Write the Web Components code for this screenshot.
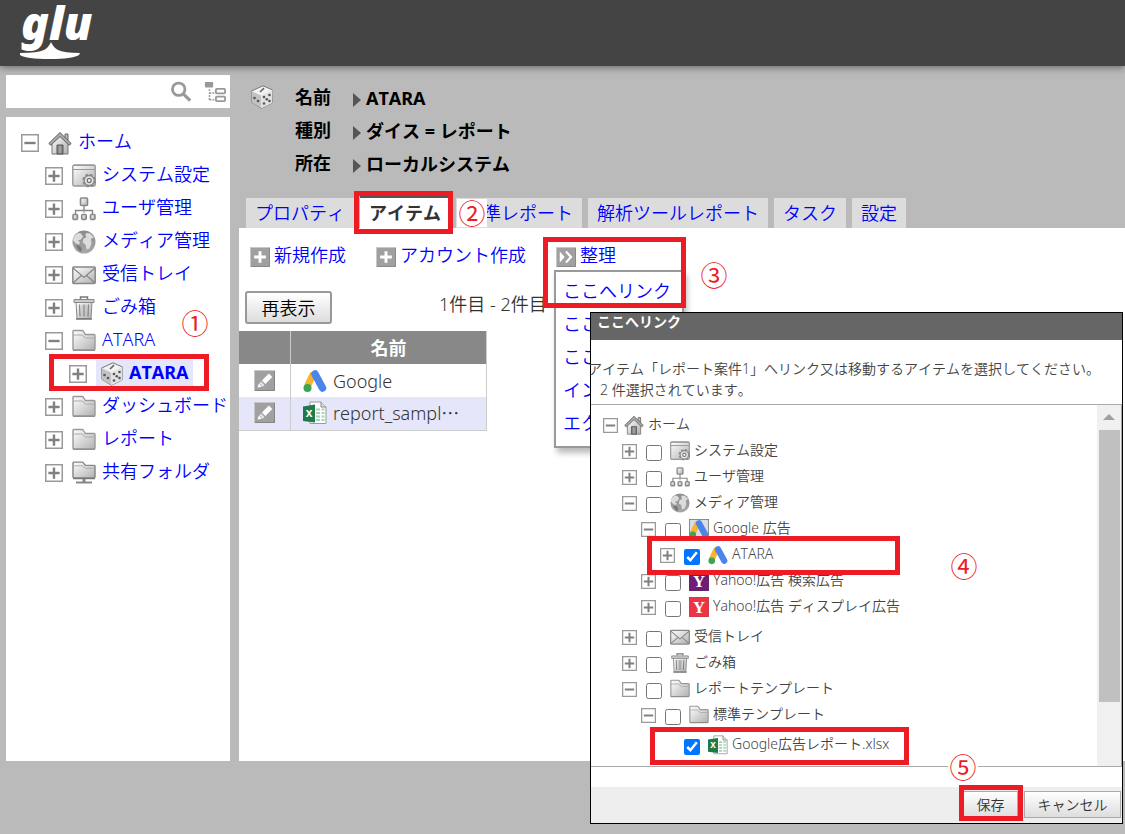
<!DOCTYPE html>
<html lang="ja">
<head>
<meta charset="utf-8">
<title>glu</title>
<style>
html, body { margin: 0; min-height: 100%; background: #bababa; }
body { font: 350 18px/33px "Noto Sans", "Noto Sans CJK JP", sans-serif; font-kerning: none; color: #333; }
</style>
</head>
<body>
<glu-app></glu-app>
<script>
const G = '<defs><linearGradient id="g" x1="0" y1="0" x2="1" y2="1"><stop offset="0" stop-color="#fff"/><stop offset="1" stop-color="#b0b0b0"/></linearGradient></defs>';
const ADS = '<path d="M10.5 4.5 4.5 17" stroke="#f6b52c" stroke-width="7" /><path d="M12 5l7.5 14" stroke="#4c84ec" stroke-width="7.5" stroke-linecap="round"/><circle cx="4.5" cy="19" r="4" fill="#3da456"/>';
const FOLDER = 'M1 20V2.500q0-1 1-1h8q1 0 1.500 1l1.800 3H22q1 0 1 1V20q0 1-1 1H2q-1 0-1-1z';
const TOOL = '<rect x=".5" y=".5" width="23" height="23" fill="#a0a0a0" stroke="#c8c8c8"/><path d="M23.500 1v22.500H1" fill="none" stroke="#777"/>';
const DOT = (x, y, r = 1.300) => `<ellipse cx="${x}" cy="${y}" rx="${r}" ry="${r}" fill="#555"/>`;
const ICONS = {
  plus: '<rect x="1" y="1" width="22" height="22" fill="#fff" stroke="#999" stroke-width="2"/><path d="M12 4.500v15M4.500 12h15" stroke="#808080" stroke-width="3.200"/>',
  minus: '<rect x="1" y="1" width="22" height="22" fill="#fff" stroke="#999" stroke-width="2"/><path d="M4.500 12h15" stroke="#808080" stroke-width="3.200"/>',
  home: G + '<path d="M17 3h3v6h-3z" fill="#bbb" stroke="#666"/><path d="M4 11v12h16V11l-8-8z" fill="url(#g)" stroke="#777"/><path d="M.8 12.500 12 1.500l11.200 11-2 1.700L12 5.500 2.800 14.200z" fill="#aaa" stroke="#606060"/><path d="M9 23v-9h6v9z" fill="#888" stroke="#555"/><path d="M12 15v7" stroke="#bbb"/>',
  settings: G + '<rect x=".8" y="1" width="22.400" height="21" rx="1.500" fill="url(#g)" stroke="#999" stroke-width="1.400"/><path d="M1 1.500h22M1 5.500h22" stroke="#999" stroke-width="1.200"/><circle cx="17.200" cy="16.500" r="5.800" fill="#ddd" stroke="#888" stroke-width="2" stroke-dasharray="2.800 1.750"/><circle cx="17.200" cy="16.500" r="5" fill="#e8e8e8" stroke="#888" stroke-width="1.300"/><circle cx="17.200" cy="16.500" r="2" fill="#fff" stroke="#777" stroke-width="1.300"/>',
  org: G + '<path d="M12 9v4M3.500 17v-3.500h17V17" fill="none" stroke="#888" stroke-width="1.400"/><path d="M12 12v4" stroke="#999"/><g fill="url(#g)" stroke="#888" stroke-width="1.600"><rect x="8.500" y="1" width="7" height="7.500" rx="1"/><rect x="1" y="17.500" width="4.500" height="5" rx="1"/><rect x="9.700" y="17.500" width="4.500" height="5" rx="1"/><rect x="18.500" y="17.500" width="4.500" height="5" rx="1"/></g>',
  globe: '<defs><linearGradient id="r" x1="0" y1="0" x2="0" y2="1"><stop offset="0" stop-color="#8c8c8c"/><stop offset="1" stop-color="#a8a8a8"/></linearGradient></defs><circle cx="12" cy="12" r="11.500" fill="url(#r)"/><path d="M1 10q1-5 5-7l3 .5 2 3-2 3-3 1 2 2-1 2-3-1-2-2zM14 3l4 .5 4 4-3 1 .5 5-2 5-3 1-1-5-3-2 1-4 3-1-1-2z" fill="#dcdcdc"/><path d="M4 15l4 1 2 3-1 3q-4-2-5-7z" fill="#777"/>',
  mail: G + '<rect x=".8" y="4" width="22.400" height="16.500" rx="1" fill="url(#g)" stroke="#888" stroke-width="1.500"/><path d="M1 5l11 9.500L23 5M1 20l8.500-7.500M23 20l-8.500-7.500" fill="none" stroke="#888" stroke-width="1.300"/>',
  trash: G + '<path d="M4 6l1 16.500h14L20 6z" fill="url(#g)" stroke="#888"/><path d="M2 3.500h20v3H2z" fill="#ccc" stroke="#888"/><path d="M8.500 3V1h7v2M4 23h16" fill="none" stroke="#777" stroke-width="1.500"/><path d="M7.500 8.500l.5 12M12 8.500v12M16.500 8.500l-.5 12" stroke="#888" stroke-width="1.300"/><path d="M10 8.500v12M14 8.500v12" stroke="#bbb"/>',
  folder: G + `<path d="${FOLDER}" fill="url(#g)" stroke="#999" stroke-width="1.400"/><path d="M1 6h9l3.500 3H23" fill="none" stroke="#aaa"/><path d="M1 21.300h22" stroke="#888"/>`,
  netfolder: G + `<g transform="scale(1 .8)"><path d="${FOLDER}" fill="url(#g)" stroke="#888" stroke-width="1.500"/><path d="M1 6h9l3.500 3H23" fill="none" stroke="#aaa"/></g><path d="M1 17.500h22" stroke="#777" stroke-width="1.500"/><path d="M12 18v3" stroke="#888" stroke-width="3"/><path d="M4 21.500h16" stroke="#888" stroke-width="2"/>`,
  dice: '<path d="M1.500 6L13 .8 22.500 5 22 18 11.500 23.300 2 17.500z" fill="#f2f2f2" stroke="#777" stroke-linejoin="round"/><path d="M1.500 6L11 10.500l.5 12.800L2 17.500z" fill="#c2c2c2"/><path d="M11 10.500L22.500 5 22 18l-10.500 5.300z" fill="#e2e2e2"/><path d="M10 7l4-3.800" stroke="#666" stroke-width="1.700"/>' + DOT(4.5, 13) + DOT(8, 16) + DOT(14, 12) + DOT(19.500, 10) + DOT(16.800, 14.300) + DOT(14, 18.500) + DOT(19.500, 16),
  ads: ADS,
  adsbox: '<rect x=".5" y=".5" width="23" height="23" fill="#d9dde5" stroke="#777"/>' + ADS,
  excel: '<path d="M7 1h11l5 5v16.500H7z" fill="#fff" stroke="#999"/><path d="M18 1v5h5" fill="#ddd" stroke="#888"/><path d="M13 8.500h4M13 12h4M13 15.500h4M13 19h4M18.500 12h3M18.500 15.500h3M18.500 19h3M18.500 8.500h3" stroke="#a8d4b8" stroke-width="2"/><path d="M0 5.500l12-2v18L0 20z" fill="#1f7a48"/><text x="6" y="16" text-anchor="middle" font-family="Liberation Sans" font-weight="700" font-size="12" fill="#fff">x</text>',
  yahoop: '<rect x=".5" y=".5" width="23" height="23" fill="#701b78" stroke="#54165c"/><text x="12" y="19" text-anchor="middle" font-family="Liberation Serif" font-weight="700" font-size="20" fill="#fff">Y</text>',
  yahoor: '<rect x=".5" y=".5" width="23" height="23" fill="#ee3344" stroke="#c82c3c"/><text x="12" y="19" text-anchor="middle" font-family="Liberation Serif" font-weight="700" font-size="20" fill="#fff">Y</text>',
  search: '<circle cx="9.500" cy="9" r="6.800" fill="none" stroke="#999" stroke-width="3"/><path d="M14.500 14l7.500 7.500" stroke="#999" stroke-width="3.500"/>',
  treeview: '<rect x="1" y="1" width="9" height="6" rx="1" fill="#999"/><path d="M6 9v12M6 13h6M6 20.500h6" fill="none" stroke="#999" stroke-width="1.600" stroke-dasharray="2 1.200"/><rect x="13" y="8.500" width="10" height="5" rx="1" fill="none" stroke="#999" stroke-width="2"/><rect x="13" y="17" width="10" height="5" rx="1" fill="none" stroke="#999" stroke-width="2"/>',
  add: TOOL + '<path d="M12 5v14M5 12h14" stroke="#fff" stroke-width="3.500"/>',
  more: TOOL + '<path d="M4.500 5.500l6 6.500-6 6.500z" fill="#fff"/><path d="M12 5.500l6 6.500-6 6.500" fill="none" stroke="#fff" stroke-width="2.600"/>',
  edit: TOOL + '<path d="M9 12L17 4l4 4-8 8z" fill="#fff"/><path d="M8 13l4 4-2 2-4-4z" fill="#e4e4e4"/><path d="M5.500 15.500l3.500 3.500-5 1z" fill="#fff"/>'
};

class UiIcon extends HTMLElement {
  connectedCallback() {
    const s = this.getAttribute('size') || 24;
    this.attachShadow({ mode: 'open' }).innerHTML = `<style>:host{display:block;flex:none;width:${s}px;height:${s}px}svg{display:block}</style>
      <svg width="${s}" height="${s}" viewBox="0 0 24 24" fill="none" aria-hidden="true">${ICONS[this.getAttribute('name')]}</svg>`;
  }
}
customElements.define('ui-icon', UiIcon);

const define = (name, html) => customElements.define(name, class extends HTMLElement {
  constructor() { super(); this.attachShadow({ mode: 'open' }).innerHTML = html; }
});

/* red guide frame, laid over the positioned element that holds it */
define('guide-frame', '<style>:host{display:block;position:absolute;box-sizing:border-box;border:5px solid #ed1c24;pointer-events:none;z-index:3}</style>');
/* numbered step of the guide */
define('guide-step', '<style>:host{display:block;position:absolute;z-index:4;width:30px;height:28px;text-align:center;font:400 27px/28px "Noto Sans CJK JP",sans-serif;color:#ed1c24}</style><slot></slot>');

define('glu-header', `
<style>
:host{display:block;position:relative;z-index:1;height:66px;background:#444;box-shadow:0 2px 7px #707070}
svg{display:block;margin-left:16px}
text{font:italic 900 46px "Noto Sans",sans-serif;fill:#fff}
</style>
<svg width="80" height="66" viewBox="0 0 80 66" role="img" aria-label="glu">
<text x="5" y="40">glu</text>
<path d="M4 53q18 0 24-3 5-3 7-8 2 5 7 8 6 3 22 3l-1 2q-7 4-29 4-24 0-30-4z" fill="#fff"/>
</svg>`);

define('search-box', `
<style>
:host{display:flex;align-items:center;height:33px;background:#fff}
input{flex:1;min-width:0;border:0;outline:0;background:none;font:inherit;padding:0 6px}
button{border:0;background:none;padding:0;margin-right:4px}
button+button{margin-left:8px}
</style>
<input type="text" aria-label="検索">
<button aria-label="検索"><ui-icon name="search" size="22"></ui-icon></button>
<button aria-label="ツリー"><ui-icon name="treeview" size="22"></ui-icon></button>`);

class TreeRow extends HTMLElement {
  connectedCallback() {
    const lv = +this.getAttribute('level') || 0, sel = this.hasAttribute('selected');
    this.attachShadow({ mode: 'open' }).innerHTML = `
<style>
:host{display:flex;align-items:center;height:33px;position:relative;padding-left:${15 + lv * 24}px;white-space:nowrap}
a{display:flex;align-items:center;gap:6px;margin-left:9px;color:#00f;text-decoration:none;line-height:26px}
a.sel{background:#e6e6fa;font-weight:700;padding:0 4px;gap:5px}
span{display:block;padding-bottom:3px;line-height:24px}
</style>
<ui-icon name="${this.hasAttribute('open') ? 'minus' : 'plus'}" size="18"></ui-icon>
<a href="#" class="${sel ? 'sel' : ''}"><ui-icon name="${this.getAttribute('icon')}"></ui-icon><span><slot></slot></span></a>
${sel ? '<guide-frame style="left:43px;right:21px;top:-3px;bottom:-1px"></guide-frame>' : ''}`;
  }
}
customElements.define('tree-row', TreeRow);

define('nav-tree', `
<style>:host{display:block;position:relative;background:#fff;padding-top:9px;flex:1}</style>
<tree-row icon="home" open>ホーム</tree-row>
<tree-row level="1" icon="settings">システム設定</tree-row>
<tree-row level="1" icon="org">ユーザ管理</tree-row>
<tree-row level="1" icon="globe">メディア管理</tree-row>
<tree-row level="1" icon="mail">受信トレイ</tree-row>
<tree-row level="1" icon="trash">ごみ箱</tree-row>
<tree-row level="1" icon="folder" open>ATARA</tree-row>
<tree-row level="2" icon="dice" selected>ATARA</tree-row>
<tree-row level="1" icon="folder">ダッシュボード</tree-row>
<tree-row level="1" icon="folder">レポート</tree-row>
<tree-row level="1" icon="netfolder">共有フォルダ</tree-row>
<guide-step style="left:174px;top:192px">①</guide-step>`);

define('item-summary', `
<style>
:host{display:flex;padding:7px 0 0 11px;gap:21px;color:#000;font-weight:700}
ui-icon{margin-top:3px}
dl{margin:0;display:grid;grid-template-columns:58px auto}
dd{margin:0;display:flex;align-items:center;gap:5px;white-space:pre}
dd::before{content:"";border:solid transparent;border-width:7px 0 7px 8px;border-left-color:#555;margin-top:3px}
dt,dd{height:33px;line-height:31px}
</style>
<ui-icon name="dice"></ui-icon>
<dl><dt>名前</dt><dd>ATARA</dd><dt>種別</dt><dd>ダイス = レポート</dd><dt>所在</dt><dd>ローカルシステム</dd></dl>`);

define('tab-bar', `
<style>
:host{display:flex;align-items:flex-end;gap:6px;padding:15px 0 0 7px;white-space:nowrap}
a{display:block;position:relative;height:30px;line-height:30px;padding:0 9px;background:#dcdcdc;color:#00f;text-decoration:none}
a.on{background:#fff;color:#333;font-weight:700;border-top:2px solid #555}
guide-step{background:#fff}
</style>
<a href="#">プロパティ</a>
<a href="#" class="on">アイテム<guide-frame style="left:-6px;right:-3px;top:-7px;bottom:-6px"></guide-frame></a>
<a href="#">標準レポート<guide-step style="left:1px;top:1px">②</guide-step></a>
<a href="#">解析ツールレポート</a><a href="#">タスク</a><a href="#">設定</a>`);

define('tool-bar', `
<style>
:host{display:flex;gap:30px;padding:12px 0 0 11px;white-space:nowrap}
a{display:flex;align-items:center;gap:4px;color:#00f;text-decoration:none;line-height:30px;height:33px}
a span{height:33px}
.menu{position:relative}
nav{position:absolute;left:-2px;top:30px;width:126px;z-index:2;background:#fff;border:2px solid #999;box-shadow:3px 5px 6px #bbb;padding:2px 0 7px}
nav a{padding-left:7px}
</style>
<a href="#"><ui-icon name="add" size="20"></ui-icon><span>新規作成</span></a>
<a href="#"><ui-icon name="add" size="20"></ui-icon><span>アカウント作成</span></a>
<div class="menu">
<a href="#"><ui-icon name="more" size="20"></ui-icon><span>整理</span></a>
<nav><a href="#">ここへリンク</a><a href="#">ここへ移動</a><a href="#">ここへコピー</a><a href="#">インポート</a><a href="#">エクスポート</a></nav>
<guide-frame style="left:-13px;top:-3px;width:143px;height:71px"></guide-frame>
<guide-step style="left:143px;top:21px">③</guide-step>
</div>`);

define('item-list', `
<style>
:host{display:block}
.bar{display:flex;padding:18px 0 7px 6px;gap:107px}
button{width:87px;height:33px;box-sizing:border-box;border:2px solid #999;border-radius:3px;background:linear-gradient(#fff,#ddd);font:inherit;line-height:28px;padding:0;color:#000}
.bar span{line-height:26px}
table{border-collapse:collapse;width:248px;table-layout:fixed}
th,td{padding:0;height:32px;line-height:30px;border:1px solid #ccc;border-width:0 1px 0 0}
tr{height:33px}
th{background:#888;color:#fff;font-weight:700}
th:first-child{width:51px}
tbody tr:last-child{background:#e6e6fa;border-bottom:1px solid #ccc}
td:first-child ui-icon{margin:-1px auto 0}
td button{display:block;width:auto;height:auto;border:0;background:none;margin:auto}
.n{display:flex;align-items:center;gap:6px;padding-left:12px}
</style>
<div class="bar"><button>再表示</button><span>1件目 - 2件目</span></div>
<table>
<thead><tr><th></th><th>名前</th></tr></thead>
<tbody>
<tr><td><button aria-label="編集"><ui-icon name="edit" size="21"></ui-icon></button></td><td><div class="n"><ui-icon name="ads"></ui-icon><span>Google</span></div></td></tr>
<tr><td><button aria-label="編集"><ui-icon name="edit" size="21"></ui-icon></button></td><td><div class="n"><ui-icon name="excel"></ui-icon><span>report_sampl⋯</span></div></td></tr>
</tbody></table>`);

let uid = 0;
class PickRow extends HTMLElement {
  connectedCallback() {
    const lv = +this.getAttribute('level') || 0, ex = this.getAttribute('state') || 'plus', id = 'p' + (++uid);
    this.attachShadow({ mode: 'open' }).innerHTML = `
<style>
:host{display:flex;align-items:center;height:26px;position:relative;padding-left:${12 + lv * 19}px;white-space:nowrap}
:host([gap]){margin-top:4px}
.none{width:15px}
input{width:16px;height:16px;margin:3px 0 0 9px;flex:none}
label{display:flex;align-items:center;gap:4px;margin-left:${lv ? 8 : 6}px}
span{display:block;line-height:22px;padding-bottom:3px}
</style>
${ex === 'none' ? '<div class="none"></div>' : `<ui-icon name="${ex}" size="15"></ui-icon>`}
${lv ? `<input type="checkbox" id="${id}" ${this.hasAttribute('checked') ? 'checked' : ''}>` : ''}
<label ${lv ? `for="${id}"` : ''}><ui-icon name="${this.getAttribute('icon')}" size="20"></ui-icon><span><slot></slot></span></label>
<slot name="frame"></slot>`;
  }
}
customElements.define('pick-row', PickRow);

define('link-dialog', `
<style>
:host{display:block;position:absolute;z-index:5;top:312px;left:590px;right:2px;border:1px solid #000;background:#fff;font-size:14px;line-height:21px;color:#444;box-sizing:border-box}
h2{margin:0;height:27px;line-height:18px;padding-left:6px;background:#666;color:#fff;font-size:14px;font-weight:700}
p{margin:0 0 0 -3px;white-space:nowrap}
.msg{padding:18px 0 4px}
.msg p+p{margin-left:9px}
.pane{display:flex;border:solid #aaa;border-width:1px 1px 1px 0}
.tree{flex:1;padding:7px 0 8px}
.scroll{width:24px;background:#f0f0f0;padding:9px 0 0;box-sizing:border-box}
.scroll::before{content:"";display:block;width:0;border:solid transparent;border-width:0 6px 6px;border-bottom-color:#a0a0a0;margin:0 auto 10px}
.scroll::after{content:"";display:block;height:272px;background:#c0c0c0;margin:0 1px 0 2px}
footer{margin-top:20px;background:#eee;display:flex;justify-content:flex-end;gap:6px;padding:4px 1px 5px}
.w{position:relative}
button{height:27px;width:97px;display:block;box-sizing:border-box;border:1px solid #aaa;background:linear-gradient(#fff,#ddd);font:inherit;line-height:22px;color:#333;padding:0}
.w button{width:55px}
</style>
<h2>ここへリンク</h2>
<div class="msg"><p>アイテム「レポート案件1」へリンク又は移動するアイテムを選択してください。</p><p>2 件選択されています。</p></div>
<div class="pane"><div class="tree">
<pick-row state="minus" icon="home">ホーム</pick-row>
<pick-row level="1" icon="settings">システム設定</pick-row>
<pick-row level="1" icon="org">ユーザ管理</pick-row>
<pick-row level="1" state="minus" icon="globe">メディア管理</pick-row>
<pick-row level="2" state="minus" icon="adsbox">Google 広告</pick-row>
<pick-row level="3" icon="ads" checked>ATARA<guide-frame slot="frame" style="left:56px;top:-6px;width:253px;height:39px"></guide-frame></pick-row>
<pick-row level="2" icon="yahoop">Yahoo!広告 検索広告</pick-row>
<pick-row level="2" icon="yahoor">Yahoo!広告 ディスプレイ広告</pick-row>
<pick-row level="1" icon="mail" gap>受信トレイ</pick-row>
<pick-row level="1" icon="trash">ごみ箱</pick-row>
<pick-row level="1" state="minus" icon="folder">レポートテンプレート</pick-row>
<pick-row level="2" state="minus" icon="folder">標準テンプレート</pick-row>
<pick-row level="3" state="none" icon="excel" checked gap>Google広告レポート.xlsx<guide-frame slot="frame" style="left:59px;top:-5px;width:259px;height:38px"></guide-frame></pick-row>
</div><div class="scroll"></div></div>
<footer><div class="w"><button>保存</button><guide-frame style="left:-4px;right:-5px;top:-6px;bottom:-3px"></guide-frame></div><button>キャンセル</button></footer>
<guide-step style="left:358px;top:239px">④</guide-step>
<guide-step style="left:357px;top:440px;background:#fff">⑤</guide-step>`);

define('glu-app', `
<style>
:host{display:flex;flex-direction:column;min-height:100vh;position:relative;overflow:hidden;background:#bababa}
.body{flex:1;display:flex;gap:9px;padding:9px 0 73px 6px}
aside{width:224px;flex:none;display:flex;flex-direction:column;gap:9px}
main{flex:1;min-width:0;display:flex;flex-direction:column}
section{flex:1;background:#fff}
</style>
<glu-header></glu-header>
<div class="body">
<aside><search-box></search-box><nav-tree></nav-tree></aside>
<main><item-summary></item-summary><tab-bar></tab-bar><section><tool-bar></tool-bar><item-list></item-list></section></main>
</div>
<link-dialog></link-dialog>`);
</script>
</body>
</html>
